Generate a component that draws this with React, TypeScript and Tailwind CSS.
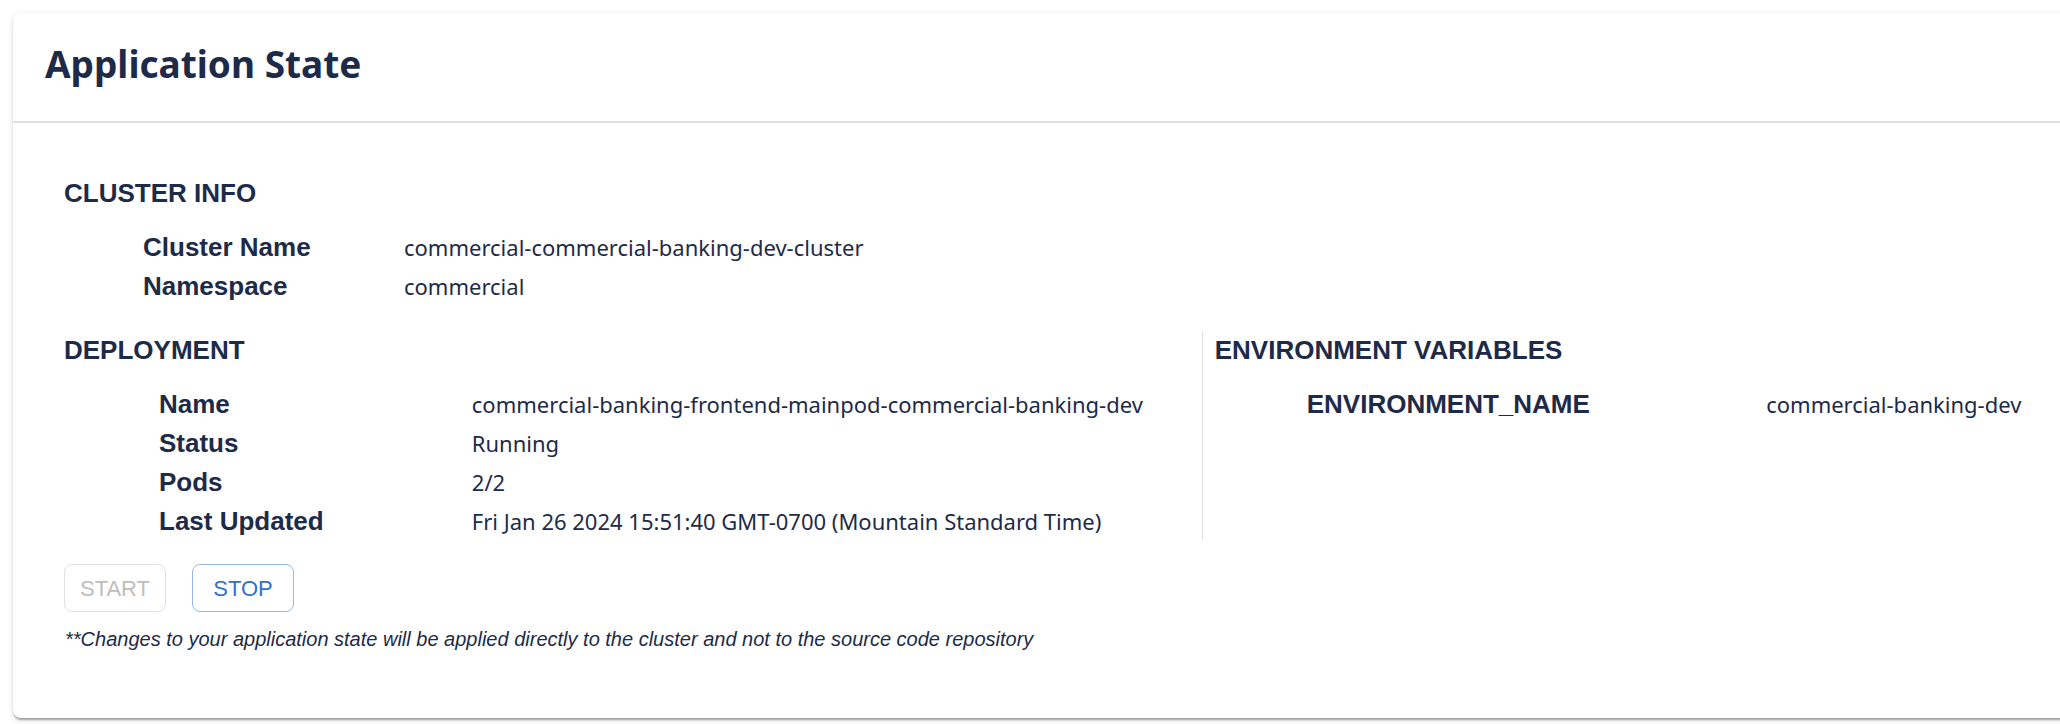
type Item = { label: string; value: string };

const cluster: Item[] = [
  { label: "Cluster Name", value: "commercial-commercial-banking-dev-cluster" },
  { label: "Namespace", value: "commercial" },
];

const deployment: Item[] = [
  { label: "Name", value: "commercial-banking-frontend-mainpod-commercial-banking-dev" },
  { label: "Status", value: "Running" },
  { label: "Pods", value: "2/2" },
  { label: "Last Updated", value: "Fri Jan 26 2024 15:51:40 GMT-0700 (Mountain Standard Time)" },
];

const environment: Item[] = [{ label: "ENVIRONMENT_NAME", value: "commercial-banking-dev" }];

function SectionTitle({ children }: { children: string }) {
  return (
    <h2 className="font-['Liberation_Sans',Arial,sans-serif] text-[26px] leading-[38px] font-bold">
      {children}
    </h2>
  );
}

function Details({ items, className }: { items: Item[]; className: string }) {
  return (
    <dl className={`mt-4 grid ${className}`}>
      {items.map((item) => (
        <div key={item.label} className="col-span-2 grid grid-cols-subgrid items-baseline">
          <dt className="font-['Liberation_Sans',Arial,sans-serif] text-[26px] leading-[38px] font-bold">
            {item.label}
          </dt>
          <dd className="text-[22px] leading-[38px] whitespace-nowrap">{item.value}</dd>
        </div>
      ))}
    </dl>
  );
}

export default function App() {
  return (
    <main className="overflow-hidden bg-white pt-[13px] pb-2 pl-[13px] font-['Noto_Sans','Open_Sans',sans-serif] text-[#1d2b49]">
      <section className="-mr-4 rounded-lg bg-white pr-4 shadow-[0_4px_2px_-2px_rgba(0,0,0,0.2),0_2px_2px_0_rgba(0,0,0,0.14),0_2px_6px_0_rgba(0,0,0,0.12)]">
        <header className="-mr-4 border-b-2 border-[#e0e0e0] px-8 pt-6 pb-[30px]">
          <h1 className="text-[37px] leading-[54px] font-bold">Application State</h1>
        </header>

        <div className="pt-[51px] pb-[62px] pl-[51px]">
          <section>
            <SectionTitle>CLUSTER INFO</SectionTitle>
            <Details items={cluster} className="grid-cols-[261px_1fr] gap-y-px pl-[79px]" />
          </section>

          <div className="mt-[26px] grid grid-cols-[57%_43%]">
            <section>
              <SectionTitle>DEPLOYMENT</SectionTitle>
              <Details items={deployment} className="grid-cols-[30%_1fr] gap-y-px pl-[95px]" />
            </section>
            <section className="border-l border-[#e0e0e0] pl-3">
              <SectionTitle>ENVIRONMENT VARIABLES</SectionTitle>
              <Details items={environment} className="grid-cols-[61%_1fr] gap-y-px pl-[92px]" />
            </section>
          </div>

          <div className="mt-6 flex gap-[26px] font-['Liberation_Sans',Arial,sans-serif] text-[22px]">
            <button
              type="button"
              disabled
              className="h-12 w-[102px] rounded-lg border border-[#e0e0e0] text-[#bdbdbd]"
            >
              START
            </button>
            <button
              type="button"
              className="h-12 w-[102px] rounded-lg border border-[#97b8e9] text-[#3070d2]"
            >
              STOP
            </button>
          </div>

          <p className="mt-[11px] pb-px pl-px font-['Liberation_Sans',Arial,sans-serif] text-[20px] leading-8 italic">
            **Changes to your application state will be applied directly to the cluster and not to
            the source code repository
          </p>
        </div>
      </section>
    </main>
  );
}
